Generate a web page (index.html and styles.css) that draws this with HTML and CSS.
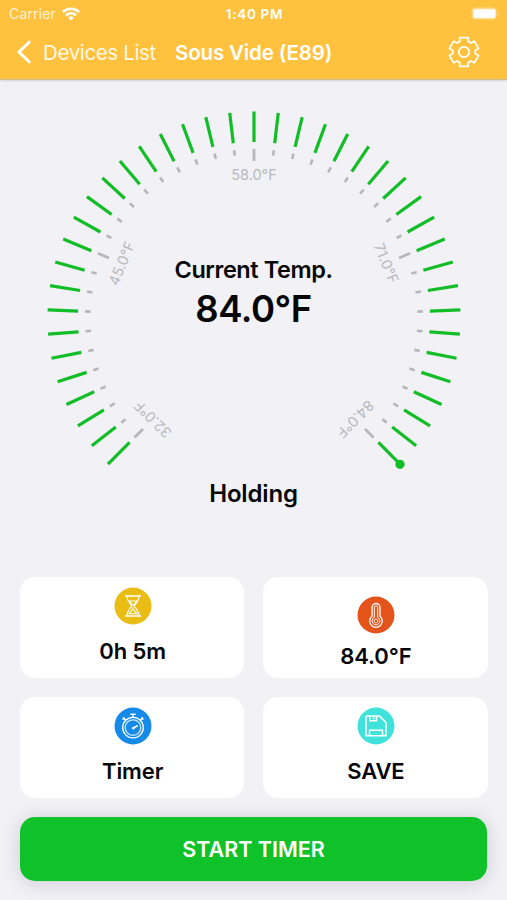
FILE: index.html
```
<!DOCTYPE html>
<html lang="en">
<head>
<meta charset="utf-8">
<title>Sous Vide</title>
<link rel="stylesheet" href="styles.css">
</head>
<body>
<header class="top">
  <div class="status">
    <div class="carrier"><span>Carrier</span>
      <svg width="18" height="14" viewBox="0 0 18 14" fill="none" stroke="#fff" stroke-width="2.5"><path d="M.9 5.2a11.5 11.5 0 0 1 16.2 0M3.9 8.3a7.2 7.2 0 0 1 10.2 0"/><path d="M9 13.6 6.2 10.7a4 4 0 0 1 5.6 0z" fill="#fff" stroke="none"/></svg>
    </div>
    <span class="clock">1:40 PM</span>
    <svg class="battery" width="29" height="13" viewBox="0 0 29 13"><rect x=".5" y=".5" width="25" height="12" rx="3.5" fill="#ffd985"/><path d="M26.8 4.2q2 2.3 0 4.6z" fill="#ffd985"/><rect x="2.5" y="2.2" width="22" height="8.8" rx="2" fill="#fff"/></svg>
  </div>
  <nav class="bar">
    <svg class="back" width="16" height="26" viewBox="0 0 16 26" fill="none" stroke="#fff" stroke-width="3" stroke-linecap="round" stroke-linejoin="round"><path d="M13.3 3 3 13l10.300 10"/></svg>
    <span class="parent">Devices List</span>
    <h1 class="title">Sous Vide (E89)</h1>
    <svg class="gear" width="32" height="32" viewBox="-16 -16 32 32" fill="none" stroke="#fff" stroke-width="1.7" stroke-linejoin="round"><path id="gear-shape"/><circle r="5.2"/></svg>
  </nav>
</header>
<main>
  <section class="gauge">
    <svg class="dial" width="507" height="400" viewBox="0 0 507 400">
      <g transform="translate(254 238)">
        <g id="ticks"></g>
        <circle cx="146" cy="146.300" r="4.600" fill="#12bd27"/>
        <g id="labels" class="labels"></g>
      </g>
    </svg>
    <div class="reading">
      <div class="caption">Current Temp.</div>
      <div class="temp">84.0°F</div>
    </div>
    <div class="state">Holding</div>
  </section>
  <section class="cards">
    <div class="card">
      <svg width="38" height="38" viewBox="-19 -19 38 38" fill="none" stroke="#fff"><circle r="18.500" fill="#e9bd14" stroke="none"/><path stroke-width="1.500" d="M-8-10H8M-8 10H8"/><path stroke-width="1.100" d="M-6-9.500C-6-4-1.500-2-1.500 0S-6 4-6 9.500M6-9.500C6-4 1.500-2 1.500 0S6 4 6 9.500M-4-5H4L0-.5zM0 1v2L-4 7.800H4L0 3"/></svg>
      <span>0h 5m</span>
    </div>
    <div class="card low">
      <svg width="38" height="38" viewBox="-19 -19 38 38" fill="none" stroke="#fff"><circle r="18.500" fill="#e4531a" stroke="none"/><path stroke-width="1.300" d="M-4-7.500a4 4 0 0 1 8 0V1.200a6.300 6.300 0 1 1-8 0z"/><path stroke-width="1" d="M-1.700-7.500a1.700 1.700 0 0 1 3.400 0V2.500a3.900 3.900 0 1 1-3.400 0z"/><circle cy="6" r="1.900" stroke-width=".8"/></svg>
      <span>84.0°F</span>
    </div>
    <div class="card">
      <svg width="38" height="38" viewBox="-19 -19 38 38" fill="none" stroke="#fff"><circle r="18.500" fill="#168ae8" stroke="none"/><circle cy="1.600" r="10.300" stroke-width="1.300"/><circle cy="1.600" r="7.800" stroke-width="1.300" stroke="#cce7ff"/><path stroke-width="1.500" d="M-2.700-11.700H2.700M0-11.700V-9M-10-8.400l3 3M10-8.400l-3 3M-10.500-6.500l2-2M10.500-6.500l-2-2"/><path stroke-width="1.600" d="M0 2.400 4.700-.5"/><circle cx=".3" cy="2.200" r="1.100" stroke-width=".8"/></svg>
      <span>Timer</span>
    </div>
    <div class="card">
      <svg width="38" height="38" viewBox="-19 -19 38 38" fill="none" stroke="#fff" stroke-width="1.500" stroke-linejoin="round"><circle r="18.500" fill="#40e3dc" stroke="none"/><path d="M-9.300-10H3.500L10-3.500V9.700H-10V-9.300zM-6.200-10v4.800H.5V-10M-2.300-8.800v2M-6.500 9.700V4.200H6.500V9.700"/></svg>
      <span>SAVE</span>
    </div>
  </section>
  <button class="start">START TIMER</button>
</main>
<script src="gauge.js"></script>
</body>
</html>
```
FILE: styles.css
```
body {
  margin: 0;
  height: 900px;
  overflow: hidden;
  background: #f1f1f6;
  color: #060606;
  font-family: Inter, "Liberation Sans", sans-serif;
}
.top {
  height: 79px;
  background: #ffc23f;
  color: #fff;
  border-bottom: 1px solid #d3ba88;
  box-shadow: 0 1px 2px rgba(0, 0, 0, .12);
}
.status {
  display: grid;
  grid-template-columns: 1fr auto 1fr;
  align-items: center;
  height: 27px;
  padding: 0 7px 0 9px;
  font-size: 14px;
}
.carrier {
  display: flex;
  align-items: center;
  gap: 6px;
  color: #fff1d4;
  letter-spacing: .15px;
}
.clock { font-size: 13.500px; font-weight: 600; letter-spacing: .7px; }
.battery { justify-self: end; }
.bar {
  display: flex;
  align-items: center;
  height: 50px;
  padding: 0 27px 0 16px;
}
.parent {
  margin-left: 11px;
  width: 132px;
  font-size: 20.500px;
  letter-spacing: -.36px;
  color: #fff7e6;
  white-space: nowrap;
}
.title {
  margin: 0;
  font-size: 20.500px;
  font-weight: 600;
  letter-spacing: -.14px;
  white-space: nowrap;
}
.gear { margin-left: auto; }
.gauge {
  display: grid;
  height: 497px;
  align-items: start;
  justify-items: center;
}
.gauge > * { grid-area: 1 / 1; }
.dial { display: block; justify-self: start; }
.labels text {
  fill: #b9b9bd;
  font-size: 14.500px;
  text-anchor: middle;
}
.reading { margin-top: 175px; text-align: center; }
.caption { font-size: 23.500px; font-weight: 600; line-height: 30px; letter-spacing: -.42px; }
.temp { font-size: 36.500px; font-weight: 600; line-height: 48px; letter-spacing: -.5px; }
.state { margin-top: 399px; font-size: 24px; font-weight: 600; line-height: 30px; letter-spacing: -.15px; }
.cards {
  display: grid;
  grid-template-columns: 1fr 1fr;
  grid-auto-rows: 101px;
  gap: 19px;
  padding: 0 19.500px 0 20px;
}
.card {
  display: flex;
  flex-direction: column;
  align-items: center;
  box-sizing: border-box;
  padding: 9.500px 0 0 1px;
  border-radius: 15px;
  background: #fff;
  font-size: 22px;
  font-weight: 600;
  line-height: 28px;
}
.card span { margin-top: 12px; letter-spacing: -.1px; }
.card.low { padding-top: 19px; }
.card.low span { margin-top: 8px; }
.start {
  display: block;
  width: 467px;
  height: 64px;
  margin: 19px 20px 0;
  border: 0;
  border-radius: 15px;
  background: #10c22a;
  color: #fff;
  font: 600 21.500px Inter, "Liberation Sans", sans-serif;
  box-shadow: 0 2px 20px rgba(30, 20, 50, .16);
}
```
FILE: gauge.js
```
const STEP = 6.75;
const NS = "http://www.w3.org/2000/svg";
const ticks = document.getElementById("ticks");
const labels = document.getElementById("labels");

function line(angle, from, to, color, width) {
  const el = document.createElementNS(NS, "line");
  el.setAttribute("y1", -from);
  el.setAttribute("y2", -to);
  el.setAttribute("stroke", color);
  el.setAttribute("stroke-width", width);
  el.setAttribute("transform", `rotate(${angle})`);
  ticks.appendChild(el);
}

for (let i = -20; i <= 20; i++) {
  const major = i % 10 === 0;
  line(i * STEP, 206.5, 176, "#12bd27", 3.2);
  line(i * STEP, 169, major ? 157 : 163.5, "#b7b7bb", major ? 2.8 : 2.6);
}

["32.0°F", "45.0°F", "58.0°F", "71.0°F", "84.0°F"].forEach((label, i) => {
  const el = document.createElementNS(NS, "text");
  el.setAttribute("y", -138);
  el.setAttribute("transform", `rotate(${(i - 2) * 67.5})`);
  el.textContent = label;
  labels.appendChild(el);
});

// Six-toothed cog outline
const points = [];
for (let i = 0; i < 6; i++) {
  for (const [offset, radius] of [[-22, 11.3], [-16.500, 15], [16.500, 15], [22, 11.3]]) {
    const a = (i * 60 + offset) * Math.PI / 180;
    points.push(`${(radius * Math.sin(a)).toFixed(2)} ${(-radius * Math.cos(a)).toFixed(2)}`);
  }
}
document.getElementById("gear-shape").setAttribute("d", `M${points.join("L")}Z`);
```
